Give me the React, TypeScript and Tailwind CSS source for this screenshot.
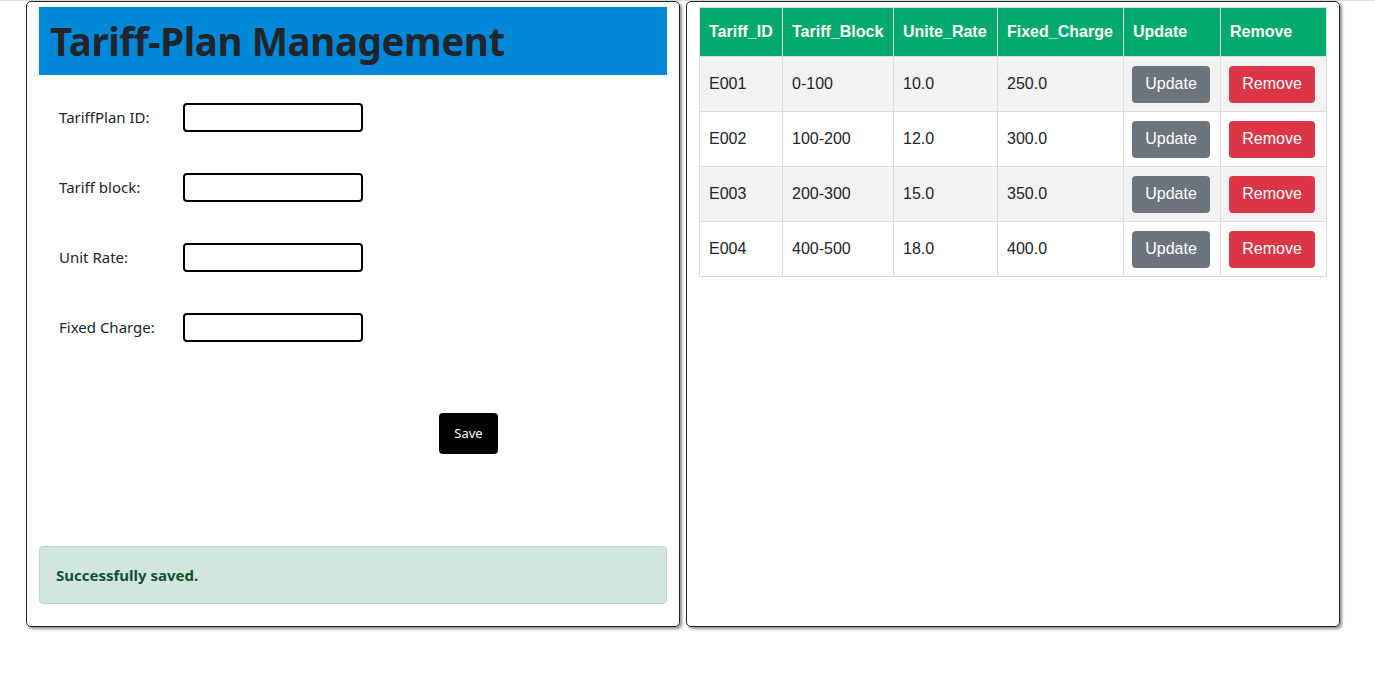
import React from "react";

const rows = [
  ["E001", "0-100", "10.0", "250.0"],
  ["E002", "100-200", "12.0", "300.0"],
  ["E003", "200-300", "15.0", "350.0"],
  ["E004", "400-500", "18.0", "400.0"],
];

const fields = ["TariffPlan ID:", "Tariff block:", "Unit Rate:", "Fixed Charge:"];

export default function App() {
  return (
    <div className="w-[1375px] h-[677px] bg-white border-t border-[#dcdcdc] font-['Noto_Sans',sans-serif]">
      <div className="flex gap-[6px] pl-[26px]">
        {/* Left panel */}
        <div className="w-[654px] h-[626px] border border-[#222] rounded-[5px] shadow-[2px_2px_3px_rgba(0,0,0,0.45)] px-[12px] pt-[5px] flex flex-col">
          <div className="h-[68px] bg-[#0288d9] flex items-center pl-[11px]">
            <h1 className="text-[38.5px] font-bold text-[#212529] leading-none tracking-[-0.4px]">Tariff-Plan Management</h1>
          </div>
          <div className="flex flex-col gap-[41px] pl-[20px] pt-[28px]">
            {fields.map((f) => (
              <div key={f} className="flex items-center h-[29px]">
                <label className="w-[124px] text-[15px] text-[#212529]">{f}</label>
                <input className="w-[180px] h-[29px] border-2 border-black rounded-[4px] outline-none" />
              </div>
            ))}
          </div>
          <div className="pl-[400px] pt-[71px]">
            <button className="w-[59px] h-[41px] bg-black text-white text-[13px] rounded-[4px]">Save</button>
          </div>
          <div className="mt-[92px] h-[58px] bg-[#d1e7dd] border border-[#badbcc] rounded-[4px] flex items-center pl-[16px]">
            <span className="font-bold text-[#0f5132] text-[15px]">Successfully saved.</span>
          </div>
        </div>
        {/* Right panel */}
        <div className="w-[654px] h-[626px] border border-[#222] rounded-[5px] shadow-[2px_2px_3px_rgba(0,0,0,0.45)] px-[12px] pt-[5px]">
          <table className="w-[628px] border-collapse font-['Liberation_Sans',Arial,sans-serif] text-[16px] text-[#212529]">
            <thead>
              <tr className="h-[49px] bg-[#04aa6d] text-white text-left">
                <th className="w-[83px] border border-[#ddd] pl-[9px] font-bold">Tariff_ID</th>
                <th className="w-[111px] border border-[#ddd] pl-[9px] font-bold">Tariff_Block</th>
                <th className="w-[104px] border border-[#ddd] pl-[9px] font-bold">Unite_Rate</th>
                <th className="w-[126px] border border-[#ddd] pl-[9px] font-bold">Fixed_Charge</th>
                <th className="w-[97px] border border-[#ddd] pl-[9px] font-bold">Update</th>
                <th className="border border-[#ddd] pl-[9px] font-bold">Remove</th>
              </tr>
            </thead>
            <tbody>
              {rows.map((r, i) => (
                <tr key={r[0]} className={"h-[55px] " + (i % 2 === 0 ? "bg-[#f2f2f2]" : "bg-white")}>
                  {r.map((c, j) => (
                    <td key={j} className="border border-[#ddd] pl-[9px]">{c}</td>
                  ))}
                  <td className="border border-[#ddd] pl-[8px]">
                    <button className="w-[78px] h-[37px] bg-[#6c757d] text-white rounded-[4px] text-[16px]">Update</button>
                  </td>
                  <td className="border border-[#ddd] pl-[8px]">
                    <button className="w-[86px] h-[37px] bg-[#dc3545] text-white rounded-[4px] text-[16px]">Remove</button>
                  </td>
                </tr>
              ))}
            </tbody>
          </table>
        </div>
      </div>
    </div>
  );
}
